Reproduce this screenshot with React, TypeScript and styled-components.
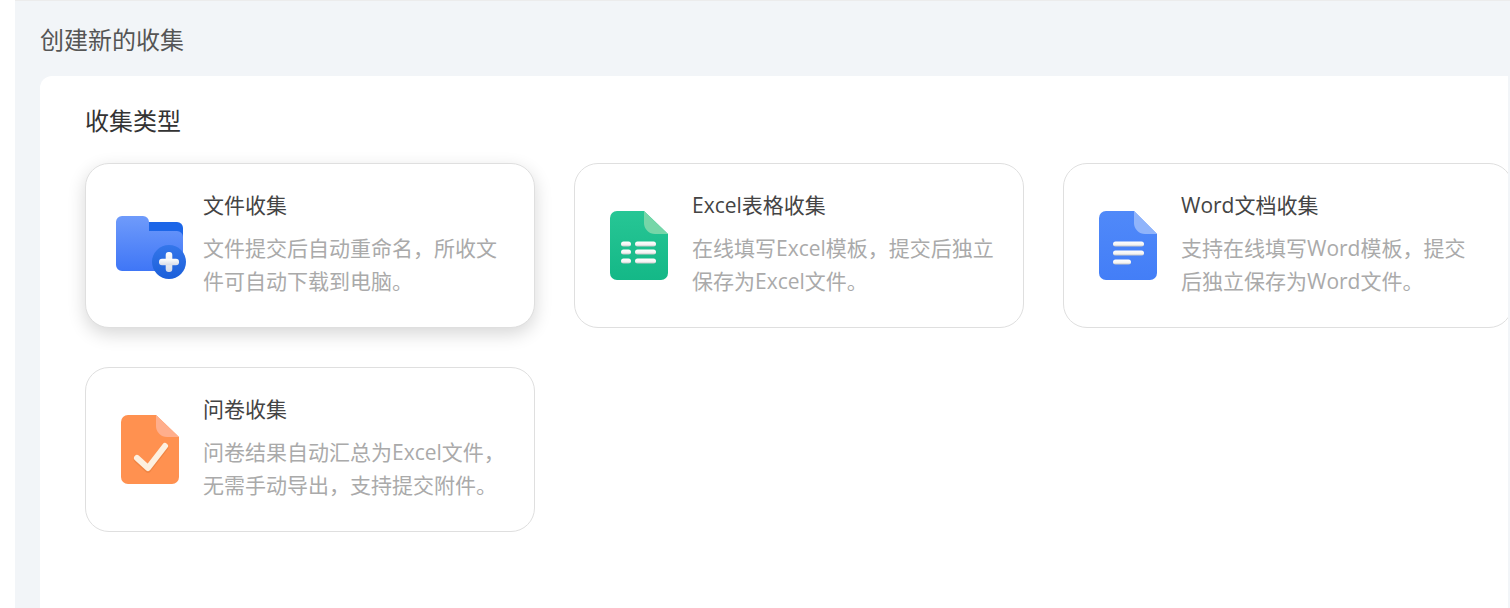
import styled, { createGlobalStyle } from "styled-components";

const GlobalStyle = createGlobalStyle`
  html, body {
    margin: 0;
    height: 100%;
    overflow: hidden;
    background: #fff;
    font-family: "Open Sans", "Noto Sans CJK SC", sans-serif;
  }
`;

const Page = styled.div`
  width: 1510px;
  height: 608px;
  box-sizing: border-box;
  padding-left: 15px;
  overflow: hidden;
`;

const Main = styled.main`
  height: 100%;
  box-sizing: border-box;
  padding: 0 2px 0 25px;
  background: #f2f5f8;
  border-top: 1px solid #ececec;
`;

const PageTitle = styled.h1`
  margin: 0;
  height: 75px;
  display: flex;
  align-items: center;
  font-size: 24px;
  font-weight: 400;
  color: #555;
`;

const Panel = styled.section`
  height: 540px;
  box-sizing: border-box;
  padding: 27px 0 0 45px;
  background: #fff;
  border-radius: 12px 0 0 0;
  overflow: hidden;
`;

const SectionTitle = styled.h2`
  margin: 0 0 24px;
  height: 36px;
  line-height: 36px;
  font-size: 24px;
  font-weight: 400;
  color: #333;
`;

const CardGrid = styled.div`
  display: grid;
  grid-template-columns: repeat(3, 450px);
  gap: 39px;
  width: 1500px;
`;

const Card = styled.article<{ $raised?: boolean }>`
  height: 165px;
  box-sizing: border-box;
  display: flex;
  align-items: center;
  padding: 0 24px;
  background: #fff;
  border: 1px solid #dfdfdf;
  border-radius: 24px;
  box-shadow: ${(p) => (p.$raised ? "0 6px 18px rgba(0, 0, 0, 0.16)" : "none")};
`;

const IconSlot = styled.div`
  width: 78px;
  height: 79px;
  flex: none;
  margin-right: 15px;
  svg {
    display: block;
  }
`;

const CardBody = styled.div`
  width: 304px;
  flex: none;
  padding-bottom: 5px;
`;

const CardTitle = styled.h3`
  margin: 0 0 11px;
  font-size: 21px;
  line-height: 32px;
  font-weight: 400;
  color: #444;
`;

const CardText = styled.p`
  margin: 0;
  font-size: 21px;
  line-height: 33px;
  color: #aaa;
`;

function Bars({ id, bars }: { id: string; bars: number[][] }) {
  return (
    <>
      <linearGradient id={id} x1="0" y1="0" x2="0" y2="1">
        <stop offset="0" stopColor="#ffffff" />
        <stop offset="0.6" stopColor="#f4f4f4" />
        <stop offset="1" stopColor="#c9c9c9" />
      </linearGradient>
      {bars.map(([x, y, w]) => (
        <rect
          key={`${x}-${y}`}
          x={x}
          y={y - 2.5}
          width={w}
          height={5}
          rx={2.5}
          fill={`url(#${id})`}
        />
      ))}
    </>
  );
}

function FolderIcon() {
  return (
    <svg width="78" height="79" viewBox="0 0 78 79">
      <defs>
        <linearGradient id="folderFront" x1="0" y1="0" x2="0" y2="1">
          <stop offset="0" stopColor="#6f9bfb" />
          <stop offset="1" stopColor="#3f76f6" />
        </linearGradient>
        <linearGradient id="folderPlus" x1="0" y1="0" x2="0" y2="1">
          <stop offset="0" stopColor="#ffffff" />
          <stop offset="1" stopColor="#d5dbe8" />
        </linearGradient>
        <linearGradient id="folderBadge" x1="0" y1="0" x2="0" y2="1">
          <stop offset="0" stopColor="#3476ea" />
          <stop offset="1" stopColor="#1b5fd9" />
        </linearGradient>
      </defs>
      <path d="M30 16h37a6 6 0 0 1 6 6v26H30z" fill="#1c66e8" />
      <path
        d="M12 10h21a6 6 0 0 1 6 6v9h28a6 6 0 0 1 6 6v28a6 6 0 0 1-6 6H12a6 6 0 0 1-6-6V16a6 6 0 0 1 6-6z"
        fill="url(#folderFront)"
      />
      <circle cx="59" cy="56" r="17" fill="url(#folderBadge)" />
      <rect x="55.7" y="46" width="6.6" height="20" rx="3" fill="url(#folderPlus)" />
      <rect x="49" y="52.7" width="20" height="6.6" rx="3" fill="url(#folderPlus)" />
    </svg>
  );
}

function SheetIcon() {
  return (
    <svg width="78" height="79" viewBox="0 0 78 79">
      <defs>
        <linearGradient id="sheetBody" x1="0" y1="0" x2="0" y2="1">
          <stop offset="0" stopColor="#27c695" />
          <stop offset="1" stopColor="#14b887" />
        </linearGradient>
      </defs>
      <path
        d="M18 5h27l24 23v39a7 7 0 0 1-7 7H18a7 7 0 0 1-7-7V12a7 7 0 0 1 7-7z"
        fill="url(#sheetBody)"
      />
      <path d="M45 5l24 23H56a11 11 0 0 1-11-11z" fill="#76d6a8" />
      <Bars
        id="sheetBar"
        bars={[
          [22, 38, 10],
          [22, 46, 10],
          [22, 55, 10],
          [36, 38, 21],
          [36, 46, 21],
          [36, 55, 21],
        ]}
      />
    </svg>
  );
}

function DocIcon() {
  return (
    <svg width="78" height="79" viewBox="0 0 78 79">
      <defs>
        <linearGradient id="docBody" x1="0" y1="0" x2="0" y2="1">
          <stop offset="0" stopColor="#5089f9" />
          <stop offset="1" stopColor="#437ef7" />
        </linearGradient>
      </defs>
      <path
        d="M18 5h28l23 23v39a7 7 0 0 1-7 7H18a7 7 0 0 1-7-7V12a7 7 0 0 1 7-7z"
        fill="url(#docBody)"
      />
      <path d="M46 5l23 23H57a11 11 0 0 1-11-11z" fill="#90b4fb" />
      <Bars
        id="docBar"
        bars={[
          [25, 38, 31],
          [25, 47, 31],
          [25, 56, 18],
        ]}
      />
    </svg>
  );
}

function CheckIcon() {
  return (
    <svg width="78" height="79" viewBox="0 0 78 79">
      <path
        d="M18 5h28l23 22v40a7 7 0 0 1-7 7H18a7 7 0 0 1-7-7V12a7 7 0 0 1 7-7z"
        fill="#ff9150"
      />
      <path d="M46 5l23 22H57a11 11 0 0 1-11-11z" fill="#ffae8c" />
      <path
        d="M27 48l11 10 17-22"
        fill="none"
        stroke="#e9803f"
        strokeWidth="6.5"
        strokeLinecap="round"
        strokeLinejoin="round"
        transform="translate(0 1.5)"
        opacity="0.7"
      />
      <path
        d="M27 48l11 10 17-22"
        fill="none"
        stroke="#fdf0e0"
        strokeWidth="6"
        strokeLinecap="round"
        strokeLinejoin="round"
      />
    </svg>
  );
}

const cards = [
  {
    title: "文件收集",
    text: "文件提交后自动重命名，所收文件可自动下载到电脑。",
    icon: <FolderIcon />,
    raised: true,
  },
  {
    title: "Excel表格收集",
    text: "在线填写Excel模板，提交后独立保存为Excel文件。",
    icon: <SheetIcon />,
  },
  {
    title: "Word文档收集",
    text: "支持在线填写Word模板，提交后独立保存为Word文件。",
    icon: <DocIcon />,
  },
  {
    title: "问卷收集",
    text: "问卷结果自动汇总为Excel文件，无需手动导出，支持提交附件。",
    icon: <CheckIcon />,
  },
];

export default function App() {
  return (
    <>
      <GlobalStyle />
      <Page>
        <Main>
          <PageTitle>创建新的收集</PageTitle>
          <Panel>
            <SectionTitle>收集类型</SectionTitle>
            <CardGrid>
              {cards.map((card) => (
                <Card key={card.title} $raised={card.raised}>
                  <IconSlot>{card.icon}</IconSlot>
                  <CardBody>
                    <CardTitle>{card.title}</CardTitle>
                    <CardText>{card.text}</CardText>
                  </CardBody>
                </Card>
              ))}
            </CardGrid>
          </Panel>
        </Main>
      </Page>
    </>
  );
}
